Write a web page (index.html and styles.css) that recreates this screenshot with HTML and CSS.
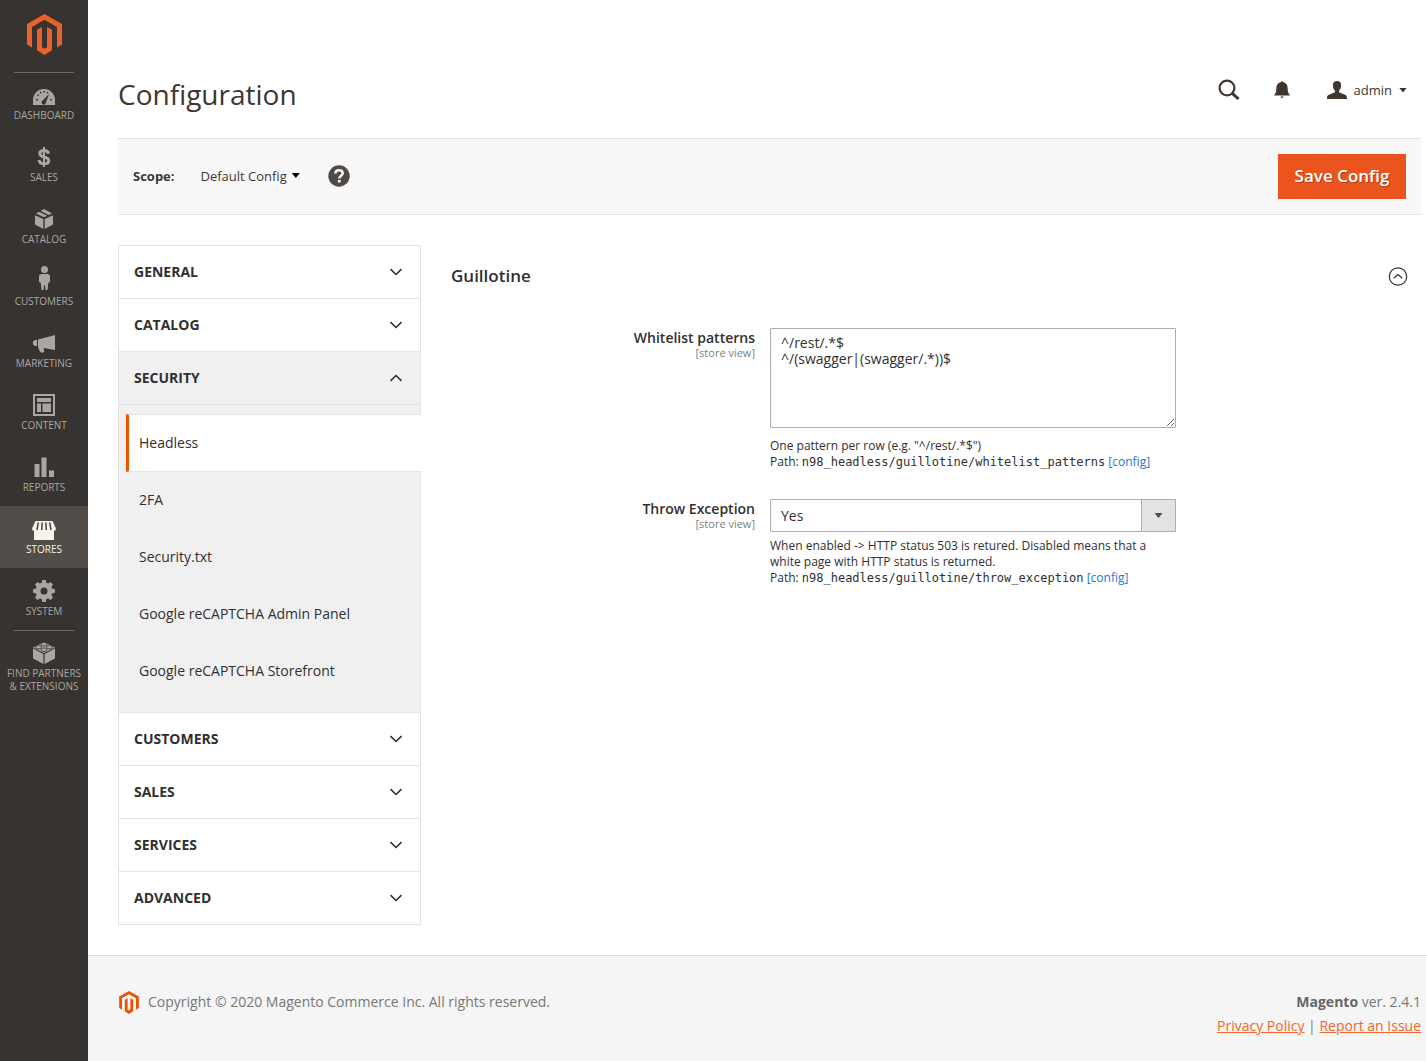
FILE: index.html
```html
<!DOCTYPE html>
<html lang="en">
<head>
<meta charset="utf-8">
<meta name="viewport" content="width=device-width, initial-scale=1">
<title>Configuration / Magento Admin</title>
<link rel="stylesheet" href="styles.css">
</head>
<body>
<svg class="sprite" aria-hidden="true">
  <symbol id="logo" viewBox="0 0 35 41">
    <path d="M17.5 0 35 10v20.500l-5 3V13L17.500 5.700 5 13v20.500l-5-3V10z"/>
    <path d="M15 13v20.200l2.500 1.500 2.500-1.500V13l5 2.800v20.400L17.500 41 10 36.200V15.800z"/>
  </symbol>
  <symbol id="chevron" viewBox="0 0 14 8"><path d="M1.500 1.200 7 6.500l5.500-5.300" fill="none" stroke="currentColor" stroke-width="1.600"/></symbol>
</svg>
<div class="app">
  <aside class="sidebar">
    <a class="brand" href="#" aria-label="Magento"><svg width="35" height="41"><use href="#logo"/></svg></a>
    <nav class="menu" aria-label="Main">
      <a class="menu-item menu-item-ruled" href="#">
        <svg viewBox="0 -2 22 24"><path fill-rule="evenodd" d="M0 20v-5a11 11 0 0 1 22 0v5zM8.500 17.500a2.200 2.200 0 0 0 4 1.200L16 9l-6.500 6.500a2.500 2.500 0 0 0-1 2zM3 14h1.800v1.500H3zm1-4 1-1 1.200 1.200-1 1zm2.700-2.700L8 6.500l.7 1.500-1.300.8zM10.400 6H12v1.600h-1.600zm3.600.7 1.500.6-.6 1.200-1.400-.6zM17.300 14H19v1.500h-1.700z"/></svg>
        <span>DASHBOARD</span></a>
      <a class="menu-item" href="#">
        <svg viewBox="0 0 22 24"><path d="M11 2v20" stroke="currentColor" stroke-width="2"/><path d="M15.600 8.700C15.200 6.300 13.700 5.400 11 5.400c-2.800 0-4.200 1.200-4.200 3 0 4.600 8.900 2.600 8.900 7 0 2.100-1.700 3.400-4.700 3.400-3.100 0-4.700-1.200-5-3.800" fill="none" stroke="currentColor" stroke-width="3"/></svg>
        <span>SALES</span></a>
      <a class="menu-item" href="#">
        <svg viewBox="0 0 22 24"><path d="M2 8.300 10.300 12v10L2 17.500zM20 8.300 11.700 12v10L20 17.500zM6 4.700l8 4-3 1.500-8-3.700zM11 2l8 4.500-3.300 1.500-8-4z"/></svg>
        <span>CATALOG</span></a>
      <a class="menu-item" href="#">
        <svg viewBox="0 3 22 24"><circle cx="11.500" cy="3.500" r="3.500"/><path d="M8.500 8h6a2.500 2.500 0 0 1 2.500 2.500V16l-1.700.8-.8 7.200h-2l-.6-5h-.8l-.6 5h-2l-.8-7.200L6 16v-5.500A2.500 2.500 0 0 1 8.500 8z"/></svg>
        <span>CUSTOMERS</span></a>
      <a class="menu-item" href="#">
        <svg viewBox="0 -1 22 24"><path d="M22 3v15l-11.500-2 .8 3.500-2 1.500-2.500-1.500L5 15V7.500zM4 8v6H2l-2-1.500v-3L2 8z"/></svg>
        <span>MARKETING</span></a>
      <a class="menu-item" href="#">
        <svg viewBox="0 0 22 24"><path fill-rule="evenodd" d="M0 1h22v22H0zm2 2v18h18V3zm2 2h14v4H4zm0 5.500h4V19H4zm5.500 0H18V19H9.500z"/></svg>
        <span>CONTENT</span></a>
      <a class="menu-item" href="#">
        <svg viewBox="0 0 22 24"><path d="M1.500 9h5v13h-5zm7-6.500h5V22h-5zM16 15.500h5V22h-5z"/></svg>
        <span>REPORTS</span></a>
      <a class="menu-item menu-item-active" href="#" aria-current="page">
        <svg class="icon-wide" viewBox="0 -1 24 24"><path d="M3.500 3h17L24 10.500a2.500 2.500 0 0 1-2 2.500v9H2v-9a2.500 2.500 0 0 1-2-2.500z"/><path d="M6.300 4.500 5 12M10.200 4.500l-.5 7.500M13.800 4.500l.5 7.500M17.700 4.500 19 12" stroke="#524d49" stroke-width="1.600"/></svg>
        <span>STORES</span></a>
      <a class="menu-item" href="#">
        <svg viewBox="0 -1 22 24"><g transform="translate(11 11)"><circle r="6" fill="none" stroke="currentColor" stroke-width="5"/><g id="teeth"><path id="tooth" d="M-2.500-7-1.800-11h3.600l.7 4zM-2.500 7-1.800 11h3.600l.7-4z"/><use href="#tooth" transform="rotate(90)"/></g><use href="#teeth" transform="rotate(45)"/></g></svg>
        <span>SYSTEM</span></a>
      <a class="menu-item menu-item-ruled" href="#">
        <svg viewBox="0 0 22 24"><path d="M0 7.500 10.400 13v10L0 17.500zM22 7.500 11.600 13v10L22 17.500zM11 1l11 5.500L11 12 0 6.500z"/><g stroke="#373330" stroke-width=".8"><ellipse cx="11" cy="3.200" rx="3" ry="1.800"/><ellipse cx="5.500" cy="6" rx="3" ry="1.800"/><ellipse cx="16.500" cy="6" rx="3" ry="1.800"/><ellipse cx="11" cy="8.700" rx="3" ry="1.800"/></g></svg>
        <span>FIND PARTNERS<br>&amp; EXTENSIONS</span></a>
    </nav>
  </aside>

  <div class="page">
    <header class="page-header">
      <h1>Configuration</h1>
      <div class="header-tools">
        <button class="icon-button" type="button" aria-label="Search"><svg class="outline" width="22" height="22" viewBox="0 0 22 22"><circle cx="9" cy="9" r="7.400" stroke-width="2.200"/><path d="M14.300 14.300l6.200 5.700" stroke-width="3"/></svg></button>
        <button class="icon-button" type="button" aria-label="Notifications"><svg width="16" height="18" viewBox="0 0 16 18"><path d="M8 0l1.300 1.300C12.800 2 13.700 5 13.700 8c0 3.500.9 4.300 2.300 6.500H0C1.400 12.300 2.300 11.500 2.300 8c0-3 .9-6 4.400-6.700zM6.300 15.500h3.400L8 17.500z"/></svg></button>
        <button class="account" type="button"><svg width="20" height="18" viewBox="0 0 20 18"><path d="M10 0c3 0 4.300 2 4.100 4.600C14 7 13.200 8.500 12 9.700v1.500l6 2.500c1.500.7 2 1.500 2 4.300H0c0-2.800.5-3.600 2-4.300l6-2.500V9.700C6.800 8.500 6 7 5.900 4.600 5.700 2 7 0 10 0z"/></svg><span>admin</span><i class="caret"></i></button>
      </div>
    </header>

    <div class="toolbar">
      <div class="scope">
        <strong>Scope:</strong>
        <button class="scope-switch" type="button">Default Config<i class="caret caret-dark"></i></button>
        <a class="help" href="#" aria-label="Help"><svg width="22" height="22" viewBox="0 0 22 22"><circle cx="11" cy="11" r="10.700"/><path d="M7.300 8.500C7.400 6.300 8.800 5.300 11 5.300s3.700 1.100 3.700 3c0 2.500-3.400 2.500-3.400 5.200" fill="none" stroke="#fff" stroke-width="2.400"/><path d="M10 15h2.600v2.500H10z" fill="#fff"/></svg></a>
      </div>
      <button class="save" type="button">Save Config</button>
    </div>

    <main class="columns">
      <nav class="tabs" aria-label="Configuration sections">
        <button class="tab" type="button">GENERAL<svg class="chevron"><use href="#chevron"/></svg></button>
        <button class="tab" type="button">CATALOG<svg class="chevron"><use href="#chevron"/></svg></button>
        <button class="tab tab-open" type="button" aria-expanded="true">SECURITY<svg class="chevron"><use href="#chevron"/></svg></button>
        <ul class="subtabs">
          <li><a class="subtab subtab-current" href="#">Headless</a></li>
          <li><a class="subtab" href="#">2FA</a></li>
          <li><a class="subtab" href="#">Security.txt</a></li>
          <li><a class="subtab" href="#">Google reCAPTCHA Admin Panel</a></li>
          <li><a class="subtab" href="#">Google reCAPTCHA Storefront</a></li>
        </ul>
        <button class="tab" type="button">CUSTOMERS<svg class="chevron"><use href="#chevron"/></svg></button>
        <button class="tab" type="button">SALES<svg class="chevron"><use href="#chevron"/></svg></button>
        <button class="tab" type="button">SERVICES<svg class="chevron"><use href="#chevron"/></svg></button>
        <button class="tab" type="button">ADVANCED<svg class="chevron"><use href="#chevron"/></svg></button>
      </nav>

      <section class="settings">
        <div class="section-head">
          <h2>Guillotine</h2>
          <button class="icon-button" type="button" aria-label="Collapse section"><svg class="outline" width="20" height="20" viewBox="0 0 20 20" stroke-width="1.200"><circle cx="10" cy="10.500" r="8.700"/><path d="M5.800 12.300 10 8.500l4.200 3.800"/></svg></button>
        </div>
        <div class="field">
          <div class="field-label"><label for="patterns">Whitelist patterns</label><small>[store view]</small></div>
          <div class="field-value">
            <textarea id="patterns" spellcheck="false">^/rest/.*$
^/(swagger|(swagger/.*))$</textarea>
            <p class="note">One pattern per row (e.g. "^/rest/.*$")<br>Path: <code>n98_headless/guillotine/whitelist_patterns</code> <a href="#">[config]</a></p>
          </div>
        </div>
        <div class="field">
          <div class="field-label"><label for="throw">Throw Exception</label><small>[store view]</small></div>
          <div class="field-value">
            <div class="select">
              <select id="throw"><option>Yes</option><option>No</option></select>
              <span class="select-arrow"><i class="caret"></i></span>
            </div>
            <p class="note note-tight">When enabled -&gt; HTTP status 503 is retured. Disabled means that a white page with HTTP status is returned.<br>Path: <code>n98_headless/guillotine/throw_exception</code> <a href="#">[config]</a></p>
          </div>
        </div>
      </section>
    </main>

    <footer class="footer">
      <p class="copyright"><svg width="20" height="23"><use href="#logo"/></svg>Copyright © 2020 Magento Commerce Inc. All rights reserved.</p>
      <div class="legal">
        <p><strong>Magento</strong> ver. 2.4.1</p>
        <p><a href="#">Privacy Policy</a> | <a href="#">Report an Issue</a></p>
      </div>
    </footer>
  </div>
</div>
</body>
</html>
```
FILE: styles.css
```css
* { box-sizing: border-box; }

body {
  margin: 0;
  background: #fff;
  color: #303030;
  font: 14px/20px "Open Sans", "Noto Sans", sans-serif;
}

h1, h2, p, ul { margin: 0; padding: 0; }
ul { list-style: none; }
svg { display: block; fill: currentColor; }
.outline { fill: none; stroke: currentColor; }

button {
  margin: 0;
  padding: 0;
  border: 0;
  background: none;
  color: inherit;
  font: inherit;
  cursor: pointer;
}

.sprite { position: absolute; width: 0; height: 0; }

.app { display: flex; min-height: 100vh; }

/* Sidebar */
.sidebar { flex: none; width: 88px; background: #373330; }

.brand {
  display: flex;
  justify-content: center;
  height: 72px;
  padding-top: 14px;
  color: #eb6129;
}

.menu-item {
  display: flex;
  flex-direction: column;
  align-items: center;
  gap: 2px;
  min-height: 62px;
  padding-top: 11px;
  color: #aaa6a0;
  font-size: 10px;
  line-height: 13px;
  text-align: center;
  text-decoration: none;
  white-space: nowrap;
}

.menu-item svg { width: 22px; height: 24px; overflow: visible; }
.menu-item .icon-wide { width: 24px; }

.menu-item-ruled {
  background: linear-gradient(#736963, #736963) center top / 60px 1px no-repeat;
}

.menu-item-active { background: #524d49; color: #f7f3eb; }

/* Page header */
.page {
  flex: 1;
  display: flex;
  flex-direction: column;
  min-width: 0;
}

.page-header {
  display: flex;
  align-items: center;
  justify-content: space-between;
  padding: 69px 19px 19px 30px;
  color: #41362f;
}

h1 { font-size: 28px; font-weight: 400; line-height: 50px; }

.header-tools { display: flex; align-items: center; gap: 34px; padding-bottom: 8px; }

.account { display: flex; align-items: center; gap: 7px; font-size: 13px; }
.account svg { margin-left: 3px; }

.caret {
  width: 8px;
  height: 5px;
  background: currentColor;
  clip-path: polygon(0 0, 100% 0, 50% 100%);
}
.caret-dark { background: #000; }

/* Toolbar */
.toolbar {
  display: flex;
  align-items: center;
  justify-content: space-between;
  margin: 0 5px 30px 30px;
  padding: 15px;
  border: solid #e3e3e3;
  border-width: 1px 0;
  background: #f8f8f8;
  color: #41362f;
  font-size: 13px;
}

.scope { display: flex; align-items: center; padding-bottom: 2px; }
.scope-switch { display: flex; align-items: center; gap: 5px; margin: 0 28px 0 26px; }
.help { color: #514943; }

.save {
  min-width: 128px;
  height: 45px;
  padding: 0 16px 2px;
  background: #eb551d;
  color: #fff;
  font-size: 17px;
  font-weight: 600;
  text-shadow: 1px 1px 0 rgba(0, 0, 0, .25);
}

/* Section tabs */
.columns {
  display: flex;
  align-items: flex-start;
  gap: 30px;
  padding: 0 18px 30px 30px;
}

.tabs {
  flex: none;
  width: 303px;
  border-bottom: 1px solid #e3e3e3;
}

.tab {
  display: flex;
  align-items: center;
  justify-content: space-between;
  width: 100%;
  height: 53px;
  padding: 0 17px 0 15px;
  border: 1px solid #e3e3e3;
  border-bottom: 0;
  font-weight: 700;
}

.tab-open { background: #f0f0f0; }
.tab-open .chevron { transform: rotate(180deg); }
.chevron { width: 14px; height: 8px; }

.subtabs {
  padding: 9px 0 12px 7px;
  border: 1px solid #e3e3e3;
  border-bottom: 0;
  background: #f0f0f0;
}

.subtab {
  display: block;
  padding: 18px 13px 19px;
  color: inherit;
  text-decoration: none;
}

.subtab-current {
  margin-right: -1px;
  padding: 18px 10px;
  border: solid #e3e3e3;
  border-width: 1px 0;
  border-left: 3px solid #eb5202;
  background: #fff;
  font-weight: 500;
}

/* Settings form */
.settings { flex: 1; min-width: 0; }

.section-head {
  display: flex;
  align-items: center;
  justify-content: space-between;
  padding: 20px 0 31px;
}

h2 { font-size: 17px; font-weight: 600; line-height: 22px; }

.section-head + .field { padding-top: 10px; }

.field {
  display: grid;
  grid-template-columns: 304fr 406fr 217fr;
  gap: 15px;
  padding-bottom: 29px;
}

.field-label { text-align: right; }
.field-label label { display: block; font-weight: 600; }
.field-label small { display: block; color: #808080; font-size: 11px; line-height: 10px; }

textarea, select {
  display: block;
  width: 100%;
  border: 1px solid #adadad;
  border-radius: 1px;
  background: #fff;
  color: #303030;
  font: inherit;
}

textarea {
  height: 100px;
  padding: 6px 10px;
  line-height: 16px;
  resize: vertical;
}

.select { display: grid; grid-template-columns: 1fr 35px; }

select {
  grid-area: 1 / 1 / 2 / 3;
  height: 33px;
  padding: 0 10px;
  appearance: none;
}

.select-arrow {
  grid-area: 1 / 2;
  display: flex;
  align-items: center;
  justify-content: center;
  border: 1px solid #adadad;
  background: #e3e3e3;
  color: #514943;
  pointer-events: none;
}

.note { margin-top: 10px; font-size: 12px; line-height: 16px; }
.note-tight { margin-top: 6px; }
.note code { font-family: "DejaVu Sans Mono", monospace; font-size: 12px; }
.note a { color: #1979e0; text-decoration: none; }

/* Footer */
.footer {
  display: flex;
  flex: 1;
  align-items: flex-start;
  justify-content: space-between;
  padding: 34px 5px 23px 30px;
  border-top: 1px solid #dcdcdc;
  background: #f5f5f5;
  color: #777;
  line-height: 24px;
}

.copyright { display: flex; align-items: center; gap: 9px; }
.copyright svg { color: #eb5202; margin-left: 1px; }
.legal { text-align: right; }
.legal strong { color: #666; }
.legal a { color: #ef672f; }
```
